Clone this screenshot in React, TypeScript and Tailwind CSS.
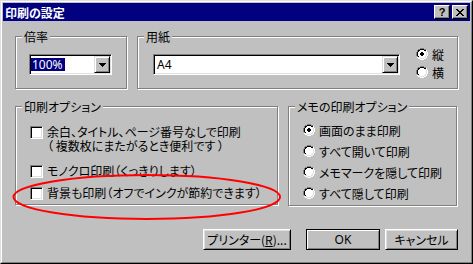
import React from "react";

const COLORS: Record<string, string> = {
  G: "#808080",
  K: "#000000",
  w: "#ffffff",
  W: "#ffffff",
  D: "#dfdfdf",
  X: "#000000",
};

const RADIO = [
  "....GGGG....",
  "..GGKKKKGG..",
  ".GKKwwwwKKW.",
  ".GKwwwwwwDW.",
  "GKwwwwwwwwDW",
  "GKwwwwwwwwDW",
  "GKwwwwwwwwDW",
  "GKwwwwwwwwDW",
  ".GKwwwwwwDW.",
  ".WDDwwwwDDW.",
  "..WWDDDDWW..",
  "....WWWW....",
];

const RADIO_ON = [
  "....GGGG....",
  "..GGKKKKGG..",
  ".GKKwwwwKKW.",
  ".GKwwwwwwDW.",
  "GKwwwXXwwwDW",
  "GKwwXXXXwwDW",
  "GKwwXXXXwwDW",
  "GKwwwXXwwwDW",
  ".GKwwwwwwDW.",
  ".WDDwwwwDDW.",
  "..WWDDDDWW..",
  "....WWWW....",
];

const CLOSE = [
  "XX....XX",
  ".XX..XX.",
  "..XXXX..",
  "...XX...",
  "..XXXX..",
  ".XX..XX.",
  "XX....XX",
];

const TRI = ["XXXXXXX", ".XXXXX.", "..XXX..", "...X..."];

function Pixels({ rows }: { rows: string[] }) {
  const rects: React.ReactNode[] = [];
  rows.forEach((r, y) =>
    [...r].forEach((c, x) => {
      if (COLORS[c])
        rects.push(
          <rect key={`${x}-${y}`} x={x} y={y} width={1} height={1} fill={COLORS[c]} />
        );
    })
  );
  return (
    <svg
      width={rows[0].length}
      height={rows.length}
      shapeRendering="crispEdges"
      className="block shrink-0"
    >
      {rects}
    </svg>
  );
}

function Radio({ checked, label }: { checked?: boolean; label: string }) {
  return (
    <div className="flex items-center h-[12px] gap-[4px]">
      <Pixels rows={checked ? RADIO_ON : RADIO} />
      <span className="whitespace-nowrap leading-[13px]">{label}</span>
    </div>
  );
}

function Checkbox() {
  return (
    <div className="w-[13px] h-[13px] shrink-0 bg-white border border-t-[#808080] border-l-[#808080] border-r-white border-b-white shadow-[inset_1px_1px_#000,inset_-1px_-1px_#dfdfdf]" />
  );
}

function Group({
  label,
  className,
  children,
}: {
  label: string;
  className: string;
  children?: React.ReactNode;
}) {
  return (
    <div
      className={`relative shrink-0 border border-[#808080] shadow-[inset_1px_1px_#fff,1px_1px_#fff] ${className}`}
    >
      <span className="absolute left-[6px] top-[-7px] bg-[#c0c0c0] px-[2px] leading-[13px] whitespace-nowrap">
        {label}
      </span>
      {children}
    </div>
  );
}

function Combo({ className, children }: { className: string; children: React.ReactNode }) {
  return (
    <div
      className={`flex h-[21px] bg-white p-px border border-t-[#808080] border-l-[#808080] border-r-white border-b-white shadow-[inset_1px_1px_#000,inset_-1px_-1px_#dfdfdf] ${className}`}
    >
      <div className="flex-1 flex items-center">{children}</div>
      <div className="w-[16px] h-[17px] bg-[#c0c0c0] flex items-center justify-center border border-t-[#dfdfdf] border-l-[#dfdfdf] border-r-black border-b-black shadow-[inset_1px_1px_#fff,inset_-1px_-1px_#808080]">
        <Pixels rows={TRI} />
      </div>
    </div>
  );
}

function Button({
  className,
  isDefault,
  children,
}: {
  className: string;
  isDefault?: boolean;
  children: React.ReactNode;
}) {
  const bevel = isDefault
    ? "border border-black shadow-[inset_1px_1px_#fff,inset_-1px_-1px_#808080]"
    : "border border-t-white border-l-white border-r-black border-b-black shadow-[inset_1px_1px_#dfdfdf,inset_-1px_-1px_#808080]";
  return (
    <div
      className={`h-[21px] bg-[#c0c0c0] flex items-center justify-center whitespace-nowrap leading-[13px] ${bevel} ${className}`}
    >
      {children}
    </div>
  );
}

export default function App() {
  return (
    <div className="relative w-[473px] h-[264px] overflow-hidden bg-[#c0c0c0] text-black text-[12px] leading-[13px] font-['Noto_Sans_CJK_JP','Noto_Sans',sans-serif] [font-feature-settings:'palt'] border border-t-[#dfdfdf] border-l-[#dfdfdf] border-r-black border-b-black">
      <div className="h-full p-px border border-t-white border-l-white border-r-[#808080] border-b-[#808080] flex flex-col">
        {/* Title bar */}
        <div className="h-[18px] shrink-0 bg-[#000080] flex items-center pl-[2px] pr-[2px]">
          <span className="flex-1 text-white font-bold leading-[13px]">印刷の設定</span>
          <div className="flex gap-[2px]">
            <div className="w-[16px] h-[14px] bg-[#c0c0c0] flex items-center justify-center border border-t-white border-l-white border-r-black border-b-black shadow-[inset_-1px_-1px_#808080] font-['Liberation_Sans',sans-serif] font-bold text-[11px] leading-[11px]">
              ?
            </div>
            <div className="w-[16px] h-[14px] bg-[#c0c0c0] flex items-center justify-center border border-t-white border-l-white border-r-black border-b-black shadow-[inset_-1px_-1px_#808080]">
              <Pixels rows={CLOSE} />
            </div>
          </div>
        </div>

        {/* Content */}
        <div className="flex flex-col px-[12px]">
          {/* Row 1 */}
          <div className="flex gap-[10px] mt-[15px]">
            <Group label="倍率" className="w-[112px] h-[53px] pt-[17px] pl-[13px]">
              <Combo className="w-[83px]">
                <span className="bg-[#000080] text-white leading-[13px] pl-px pr-[2px] font-['Noto_Sans',sans-serif]">
                  100%
                </span>
              </Combo>
            </Group>
            <Group label="用紙" className="w-[321px] h-[53px] pt-[11px] pl-[15px] flex items-start">
              <Combo className="w-[247px] mt-[6px]">
                <span className="pl-[2px] font-['Noto_Sans',sans-serif]">A4</span>
              </Combo>
              <div className="flex flex-col gap-[6px] ml-[16px]">
                <Radio checked label="縦" />
                <Radio label="横" />
              </div>
            </Group>
          </div>

          {/* Row 2 */}
          <div className="flex gap-[10px] mt-[17px] items-start">
            <Group label="印刷オプション" className="w-[263px] h-[99px] pt-[18px] pl-[14px]">
              <div className="flex items-start gap-[4px]">
                <div className="mt-px">
                  <Checkbox />
                </div>
                <div className="flex flex-col leading-[14px]">
                  <span className="whitespace-nowrap">余白、タイトル、ページ番号なしで印刷</span>
                  <span className="whitespace-nowrap">（ 複数枚にまたがるとき便利です ）</span>
                </div>
              </div>
              <div className="flex items-start gap-[4px] mt-[11px]">
                <div className="mt-px">
                  <Checkbox />
                </div>
                <span className="whitespace-nowrap leading-[14px]">モノクロ印刷（くっきりします）</span>
              </div>
              <div className="flex items-start gap-[4px] mt-[8px]">
                <div className="mt-px">
                  <Checkbox />
                </div>
                <span className="whitespace-nowrap leading-[14px]">背景も印刷（オフでインクが節約できます）</span>
              </div>
            </Group>
            <Group label="メモの印刷オプション" className="w-[169px] h-[100px] pt-[17px] pl-[14px]">
              <div className="flex flex-col gap-[9px]">
                <Radio checked label="画面のまま印刷" />
                <Radio label="すべて開いて印刷" />
                <Radio label="メモマークを隠して印刷" />
                <Radio label="すべて隠して印刷" />
              </div>
            </Group>
          </div>

          {/* Buttons */}
          <div className="flex justify-end mt-[23px]">
            <Button className="w-[88px]">
              プリンター(<span className="underline">R</span>)...
            </Button>
            <Button isDefault className="w-[74px] ml-[15px] font-['Noto_Sans',sans-serif]">
              OK
            </Button>
            <Button className="w-[73px] ml-[5px]">キャンセル</Button>
          </div>
        </div>
      </div>

      {/* Red annotation ellipse */}
      <svg
        className="absolute left-0 top-0 pointer-events-none"
        width={473}
        height={264}
        viewBox="0 0 473 264"
      >
        <ellipse cx={145.75} cy={196} rx={133.25} ry={22} fill="none" stroke="#ff0000" strokeWidth={2} />
      </svg>
    </div>
  );
}
